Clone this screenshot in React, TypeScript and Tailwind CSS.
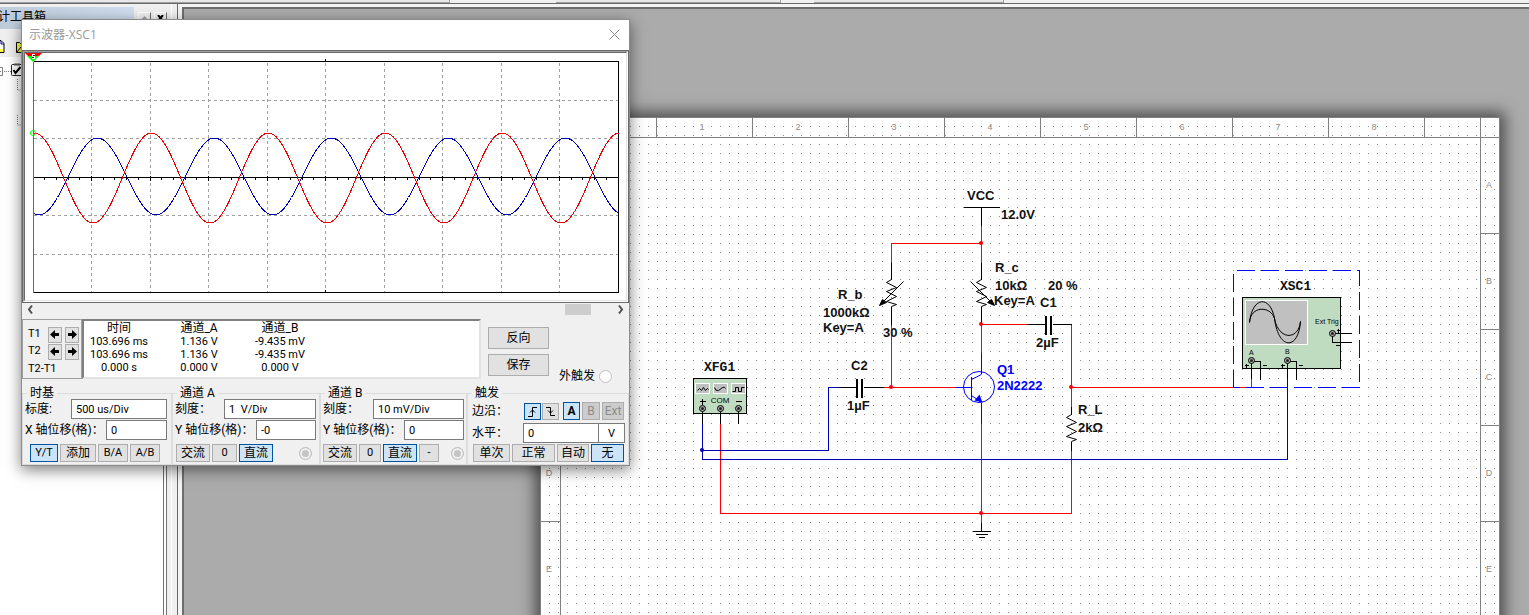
import { FC, ReactNode } from "react";
import clsx from "clsx";

type Point = [number, number];

const PERIOD = 117;

const wave = (peak: number, middle: number, amplitude: number) => {
  const points: string[] = [];
  for (let x = 33; x <= 618; x += 3) {
    const y = middle - amplitude * Math.cos(((x - peak) / PERIOD) * 2 * Math.PI);
    points.push(`${x},${y.toFixed(1)}`);
  }
  return points.join(" ");
};

/* ---------- Schematic parts ---------- */

const Wire: FC<{ points: Point[]; color?: string; width?: number }> = ({
  points,
  color = "#000",
  width = 1,
}) => (
  <polyline
    points={points.map((p) => p.join(",")).join(" ")}
    fill="none"
    stroke={color}
    strokeWidth={width}
  />
);

const Label: FC<{ x: number; y: number; fill?: string; children: ReactNode }> = ({
  x,
  y,
  fill = "#111",
  children,
}) => (
  <text x={x} y={y} fill={fill} className="font-['Liberation_Sans',sans-serif] text-[13px] font-bold">
    {children}
  </text>
);

const Resistor: FC<{ x: number; y: number }> = ({ x, y }) => (
  <path
    d={`M${x} ${y}l-5 3l10 5l-10 4l10 5l-10 5l10 3l-5 2`}
    fill="none"
    stroke="#000"
  />
);

const Terminal: FC<{ x: number; y: number }> = ({ x, y }) => (
  <g>
    <circle cx={x} cy={y} r="3" fill="#b0b0b0" stroke="#000" />
    <circle cx={x} cy={y} r="1.5" fill="#222" />
  </g>
);

const RED = "#ff0000";
const BLUE = "#0000b4";
const PART = "#0000ff";

const frameNumbers = [1, 2, 3, 4, 5, 6, 7, 8];
const frameLetters = ["A", "B", "C", "D", "E"];
const junctions: Point[] = [[981, 243], [981, 324], [891, 387], [1071, 387], [981, 513]];

const Schematic: FC = () => (
  <svg
    viewBox="540 117 960 700"
    className="block h-[700px] w-[960px] shrink-0 bg-white shadow-[0_0_14px_5px_rgba(0,0,0,0.55)]"
    role="img"
    aria-label="放大电路"
  >
    <defs>
      <pattern id="dots" width="9" height="9" patternUnits="userSpaceOnUse">
        <rect width="1" height="1" fill="#8c8c8c" />
      </pattern>
    </defs>
    <rect x="540" y="117" width="960" height="700" fill="url(#dots)" />

    {/* Frame with zone marks */}
    <g transform="translate(.5 .5)" stroke="#808080" fill="none" shapeRendering="crispEdges">
      <path d="M540 817V117H1499V817M560 117V817M1480 117V817M540 137H1499" />
      {frameNumbers.map((n) => (
        <path key={n} d={`M${656 + n * 96} 117v20`} />
      ))}
      <path d="M656 117v20" />
      {frameLetters.map((l, i) => (
        <path key={l} d={`M540 ${233 + i * 96}h20M1480 ${233 + i * 96}h19`} />
      ))}
    </g>
    <g fill="#8c8c8c" textAnchor="middle" className="font-['Liberation_Sans',sans-serif] text-[9px]">
      {frameNumbers.map((n) => (
        <text key={n} x={606 + n * 96} y="130">{n}</text>
      ))}
      {frameLetters.map((l, i) => (
        <g key={l}>
          <text x="549" y={188 + i * 96}>{l}</text>
          <text x="1489" y={188 + i * 96}>{l}</text>
        </g>
      ))}
    </g>

    {/* Wires */}
    <g transform="translate(.5 .5)" shapeRendering="crispEdges">
      <Wire color={RED} points={[[981, 225], [981, 262]]} />
      <Wire color={RED} points={[[981, 243], [891, 243], [891, 262]]} />
      <Wire color={RED} points={[[891, 324], [891, 387]]} />
      <Wire color={RED} points={[[883, 387], [955, 387]]} />
      <Wire color={RED} points={[[981, 352], [981, 324], [1026, 324]]} />
      <Wire color={RED} points={[[1071, 324], [1071, 406]]} />
      <Wire color={RED} points={[[1071, 387], [1251, 387], [1251, 378]]} />
      <Wire color={RED} points={[[981, 423], [981, 522]]} />
      <Wire color={RED} points={[[720, 423], [720, 513], [1071, 513], [1071, 450]]} />
      <Wire color={BLUE} points={[[702, 423], [702, 459], [1287, 459], [1287, 378]]} />
      <Wire color={BLUE} points={[[702, 450], [828, 450], [828, 387], [838, 387]]} />

      {/* VCC and ground */}
      <Wire points={[[963, 207], [999, 207]]} />
      <Wire points={[[981, 207], [981, 225]]} />
      <Wire points={[[981, 522], [981, 531]]} />
      <Wire points={[[972, 531], [990, 531]]} />
      <Wire points={[[975, 534], [987, 534]]} />
      <Wire points={[[978, 537], [984, 537]]} />

      {/* Resistor leads */}
      <Wire points={[[891, 262], [891, 279]]} />
      <Wire points={[[891, 306], [891, 324]]} />
      <Wire points={[[981, 262], [981, 279]]} />
      <Wire points={[[981, 306], [981, 323]]} />
      <Wire points={[[1071, 406], [1071, 414]]} />
      <Wire points={[[1071, 441], [1071, 450]]} />

      {/* Capacitors */}
      <Wire points={[[838, 387], [856, 387]]} />
      <Wire points={[[863, 387], [883, 387]]} />
      <Wire width={2} points={[[856.5, 378], [856.5, 397]]} />
      <Wire width={2} points={[[861.5, 378], [861.5, 397]]} />
      <Wire points={[[1026, 324], [1045, 324]]} />
      <Wire points={[[1052, 324], [1071, 324]]} />
      <Wire width={2} points={[[1045.5, 315], [1045.5, 334]]} />
      <Wire width={2} points={[[1050.5, 315], [1050.5, 334]]} />

      {/* Transistor leads */}
      <Wire color={PART} points={[[955, 387], [971, 387]]} />
      <Wire color={PART} points={[[981, 352], [981, 373]]} />
      <Wire color={PART} points={[[981, 402], [981, 423]]} />
      <Wire color={PART} points={[[971, 376], [971, 399]]} />
    </g>

    <g transform="translate(.5 .5)">
      <circle cx="978.5" cy="386.500" r="15.5" fill="none" stroke={PART} />
      <path d="M971 379L981 374M971 395L981 402" stroke={PART} />
      <path d="M979 394L982 402L974 400Z" fill={PART} />
      <Resistor x={891} y={279} />
      <Resistor x={981} y={279} />
      <Resistor x={1071} y={414} />
      <path d="M903 281L880 304M970 281L993 304" stroke="#000" />
      <path d="M879 305L882 299L886 302ZM994 305L991 299L987 302Z" fill="#000" stroke="#000" />
      {junctions.map(([x, y]) => (
        <circle key={`${x}-${y}`} cx={x - 0.5} cy={y - 0.5} r="2" fill={RED} />
      ))}
      <circle cx="701.5" cy="449.500" r="2" fill={BLUE} />
    </g>

    <Label x={967} y={200}>VCC</Label>
    <Label x={1001} y={219}>12.0V</Label>
    <Label x={838} y={299}>R_b</Label>
    <Label x={823} y={317}>1000kΩ</Label>
    <Label x={823} y={332}>Key=A</Label>
    <Label x={883} y={337}>30 %</Label>
    <Label x={995} y={272}>R_c</Label>
    <Label x={995} y={290}>10kΩ</Label>
    <Label x={994} y={305}>Key=A</Label>
    <Label x={1048} y={290}>20 %</Label>
    <Label x={1040} y={307}>C1</Label>
    <Label x={1036} y={347}>2µF</Label>
    <Label x={851} y={370}>C2</Label>
    <Label x={847} y={410}>1µF</Label>
    <Label x={997} y={374} fill={PART}>Q1</Label>
    <Label x={997} y={390} fill={PART}>2N2222</Label>
    <Label x={1078} y={414}>R_L</Label>
    <Label x={1078} y={432}>2kΩ</Label>

    {/* Function generator */}
    <text x="704" y="371" fill="#111" className="font-['Liberation_Mono',monospace] text-[13px] font-bold">XFG1</text>
    <g transform="translate(.5 .5)">
      <rect x="693" y="378" width="53" height="35" fill="#c0dcc0" stroke="#000" shapeRendering="crispEdges" />
      {[695, 713, 731].map((x) => (
        <rect key={x} x={x} y="383" width="14" height="10" fill="#c0c0c0" stroke="#fff" shapeRendering="crispEdges" />
      ))}
      <path
        d="M697 390l2-2l2 2l2-3l2 3l2-2l1 1M714 387q1 4 4 3l4-3q2-1 3 1M732 391h3v-4h3v4h3v-4h3"
        fill="none"
        stroke="#000"
      />
      <path d="M702 398v6M699 401h6M735 401h6" stroke="#000" shapeRendering="crispEdges" />
      <path d="M702 408v15M720 408v15M738 408v15" stroke="#000" shapeRendering="crispEdges" />
      <Terminal x={702} y={408} />
      <Terminal x={720} y={408} />
      <Terminal x={738} y={408} />
    </g>
    <text x="720" y="403" textAnchor="middle" className="font-['Liberation_Sans',sans-serif] text-[8px]">COM</text>

    {/* Oscilloscope */}
    <text x="1280" y="290" fill="#111" className="font-['Liberation_Mono',monospace] text-[13px] font-bold">XSC1</text>
    <g transform="translate(.5 .5)">
      <path
        d="M1233 387V270H1359V387H1233"
        fill="none"
        stroke={PART}
        strokeDasharray="18 6"
        shapeRendering="crispEdges"
      />
      <rect x="1242" y="297" width="98" height="71" fill="#c0dcc0" stroke="#000" shapeRendering="crispEdges" />
      <rect x="1245" y="300" width="62" height="44" fill="#c0c0c0" stroke="#fff" shapeRendering="crispEdges" />
      <path
        d="M1249 322C1252 295 1270 295 1274 318C1278 350 1298 350 1300 321M1249 322C1250 305 1270 305 1274 318C1278 340 1298 340 1300 321"
        fill="none"
        stroke="#000"
      />
      <g fill="none" stroke="#000" shapeRendering="crispEdges">
        <path d="M1251 361V378M1251 361H1260V379M1287 361V378M1287 361H1296V379" />
        <path d="M1351 333H1332V342H1351" />
        <path d="M1244 365h4M1246 363v4M1262 365h4M1280 365h4M1282 363v4M1298 365h4M1336 330h4M1338 328v4M1335 345h4" />
      </g>
      <Terminal x={1251} y={360} />
      <Terminal x={1287} y={360} />
      <Terminal x={1332} y={333} />
    </g>
    <g className="font-['Liberation_Sans',sans-serif] text-[7px]">
      <text x="1315" y="324">Ext Trig</text>
      <text x="1249" y="355">A</text>
      <text x="1285" y="354">B</text>
    </g>
  </svg>
);

/* ---------- Oscilloscope window ---------- */

const columns = [1, 2, 3, 4, 5, 6, 7, 8, 9].map((i) => Math.floor(33 + i * 58.5));
const rows = [100, 138, 215, 254];
const ticks = Array.from({ length: 49 }, (_, i) => Math.floor(33 + (i + 1) * 11.7));

const ScopeScreen: FC = () => (
  <div className="border border-[#696969]">
    <div className="border border-t-[#a0a0a0] border-r-white border-b-white border-l-[#a0a0a0]">
      <div className="border border-t-[#696969] border-r-[#e3e3e3] border-b-[#e3e3e3] border-l-[#696969] bg-white">
        <svg viewBox="25 53 601 247" className="block h-[247px] w-full" role="img" aria-label="波形">
          <g transform="translate(.5 .5)" fill="none" shapeRendering="crispEdges">
            <g stroke="#a0a0a0" strokeDasharray="3 3">
              {columns.map((x) => (
                <path key={x} d={`M${x} 62V292`} />
              ))}
              {rows.map((y) => (
                <path key={y} d={`M33 ${y}H618`} />
              ))}
            </g>
            <path d="M33 61H618V292H33M33 177H618M325 58v3M325 289v3" stroke="#000" />
            {ticks.map((x, i) => (
              <path key={x} d={i % 5 === 4 ? `M${x} 175v5` : `M${x} 176v3`} stroke="#000" />
            ))}
            <polyline points={wave(97, 176, 38.5)} stroke="#0000b4" />
            <polyline points={wave(34, 177.5, 45)} stroke="#e60000" />
            <path d="M33 61V292" stroke="#ff00ff" />
          </g>
          <circle cx="33" cy="133" r="2.500" fill="none" stroke="#00ff00" />
          <path d="M25 53h17l-3 3h-11z" fill="#f00" />
          <path d="M27 56h12l-6 6z" fill="#00ff00" />
          <path d="M32 54h3v5h-3z" fill="#fff" />
          <path d="M33 55h2v1h-2zM32 57h2v1h-2z" fill="#222" />
        </svg>
      </div>
    </div>
  </div>
);

const Button: FC<{ active?: boolean; disabled?: boolean; label?: string; className?: string; children: ReactNode }> = ({
  active,
  disabled,
  label,
  className,
  children,
}) => (
  <button
    type="button"
    disabled={disabled}
    aria-label={label}
    className={clsx(
      "flex shrink-0 items-center justify-center border whitespace-nowrap",
      active ? "border-[#00549b] bg-[#cce4f7]" : "border-[#adadad]",
      !active && (disabled ? "bg-[#cccccc] text-[#8c8c8c]" : "bg-[#e1e1e1]"),
      className
    )}
  >
    {children}
  </button>
);

const Field: FC<{ id: string; label: string; value: string; width: string }> = ({ id, label, value, width }) => (
  <div className="flex h-5 items-center justify-between">
    <label htmlFor={id} className="whitespace-nowrap">
      {label}
    </label>
    <input
      id={id}
      defaultValue={value}
      className={clsx("h-5 shrink-0 border border-[#7a7a7a] bg-white px-1 text-[11px]", width)}
    />
  </div>
);

const Group: FC<{ title: string; className?: string; children: ReactNode }> = ({ title, className, children }) => (
  <fieldset className={clsx("min-w-0 border border-[#dcdcdc] pb-[2px] pl-[2px]", className)}>
    <legend className="-mb-px ml-[2px] px-[3px] leading-[14px]">{title}</legend>
    {children}
  </fieldset>
);

const Radio: FC<{ label: string; checked?: boolean }> = ({ label, checked }) => (
  <input
    type="radio"
    aria-label={label}
    defaultChecked={checked}
    className="size-[13px] shrink-0 appearance-none rounded-full border border-[#c0c0c0] bg-white checked:bg-[#c4c4c4] checked:shadow-[inset_0_0_0_2px_#f0f0f0]"
  />
);

const CursorRow: FC<{ name: string }> = ({ name }) => (
  <div className="flex h-[17px] items-center">
    <span className="w-5">{name}</span>
    <Button label={`${name} 左移`} className="h-4 w-[14px]">
      <svg viewBox="0 0 10 9" className="h-[9px] w-[10px] shrink-0">
        <path d="M0 4.500L5 0V3H9V6H5V9Z" />
      </svg>
    </Button>
    <Button label={`${name} 右移`} className="ml-[3px] h-4 w-[14px]">
      <svg viewBox="0 0 10 9" className="h-[9px] w-[10px] shrink-0">
        <path d="M10 4.500L5 0V3H1V6H5V9Z" />
      </svg>
    </Button>
  </div>
);

const readings = [
  ["103.696 ms", "1.136 V", "-9.435 mV"],
  ["103.696 ms", "1.136 V", "-9.435 mV"],
  ["0.000 s", "0.000 V", "0.000 V"],
];

const Readout: FC = () => (
  <div className="flex h-[60px]">
    <div className="w-[60px] border border-[#a0a0a0] pt-[6px] pl-[5px] text-[11px]">
      <CursorRow name="T1" />
      <CursorRow name="T2" />
      <div className="mt-[2px] leading-[14px]">T2-T1</div>
    </div>
    <div className="w-[399px] border-2 border-t-[#808080] border-r-[#e3e3e3] border-b-[#e3e3e3] border-l-[#808080] bg-white">
      <table className="table-fixed text-center text-[11px] leading-[13px] whitespace-nowrap">
        <thead>
          <tr className="h-[14px] text-[12px]">
            <th className="w-[70px] p-0 font-normal">时间</th>
            <th className="w-[90px] p-0 font-normal">通道_A</th>
            <th className="w-[72px] p-0 font-normal">通道_B</th>
          </tr>
        </thead>
        <tbody>
          {readings.map((row, i) => (
            <tr key={i}>
              {row.map((cell, j) => (
                <td key={j} className="p-0">{cell}</td>
              ))}
            </tr>
          ))}
        </tbody>
      </table>
    </div>
    <div className="flex flex-col gap-[5px] pt-2 pl-[7px]">
      <Button className="h-[22px] w-[61px]">反向</Button>
      <Button className="h-[22px] w-[61px]">保存</Button>
    </div>
    <label className="-mb-[6px] ml-[10px] flex items-center gap-1 self-end whitespace-nowrap">
      外触发
      <Radio label="外触发" />
    </label>
  </div>
);

const ScopeWindow: FC = () => (
  <section
    aria-label="示波器-XSC1"
    className="absolute top-[19px] left-[21px] z-10 w-[609px] border border-[#8c8c8c] bg-[#f0f0f0] text-[12px] shadow-[0_4px_14px_rgba(0,0,0,0.5)]"
  >
    <header className="flex h-[30px] items-center justify-between bg-white pr-[9px] pb-px pl-[7px] text-[#999]">
      <h1 className="font-['Open_Sans','Noto_Sans_CJK_SC',sans-serif]">示波器-XSC1</h1>
      <button type="button" aria-label="关闭">
        <svg viewBox="0 0 11 11" className="block size-[11px]" stroke="#8c8c8c" fill="none">
          <path d="M.5 .5l10 10M10.500 .5l-10 10" />
        </svg>
      </button>
    </header>

    <ScopeScreen />

    {/* Horizontal scroll */}
    <div className="flex h-4 items-start justify-between px-[5px] pt-px">
      <button type="button" aria-label="向左滚动">
        <svg viewBox="0 0 6 10" className="h-[11px] w-[6px]" fill="none" stroke="#505050" strokeWidth="2">
          <path d="M5 1L2 5L5 9" />
        </svg>
      </button>
      <div className="flex flex-1 justify-end pr-[27px]">
        <div className="h-[11px] w-[26px] bg-[#cdcdcd]" />
      </div>
      <button type="button" aria-label="向右滚动">
        <svg viewBox="0 0 6 10" className="h-[11px] w-[6px]" fill="none" stroke="#505050" strokeWidth="2">
          <path d="M1 1L4 5L1 9" />
        </svg>
      </button>
    </div>

    <Readout />

    <div className="mt-[7px] grid grid-cols-[150px_148px_147px_1fr]">
      <Group title="时基" className="pr-1">
        <Field id="timebase" label="标度:" value="500 us/Div" width="w-[96px]" />
        <div className="mt-px">
          <Field id="x-offset" label="X 轴位移(格)：" value="0" width="w-[61px]" />
        </div>
        <div className="mt-1 flex gap-[2px] pl-[5px] text-[11px]">
          <Button active className="h-[18px] w-[28px]">Y/T</Button>
          <Button className="h-[18px] w-[36px] text-[12px]">添加</Button>
          <Button className="h-[18px] w-[30px]">B/A</Button>
          <Button className="h-[18px] w-[30px]">A/B</Button>
        </div>
      </Group>

      <Group title="通道 A" className="pr-[3px]">
        <Field id="scale-a" label="刻度：" value="1  V/Div" width="w-[92px]" />
        <div className="mt-px">
          <Field id="offset-a" label="Y 轴位移(格)：" value="-0" width="w-[60px]" />
        </div>
        <div className="mt-1 flex items-center gap-[2px] pl-px">
          <Button className="h-[18px] w-[34px]">交流</Button>
          <Button className="h-[18px] w-[25px] text-[11px]">0</Button>
          <Button active className="h-[18px] w-[34px]">直流</Button>
          <span className="ml-auto flex pr-1">
            <Radio label="通道 A" checked />
          </span>
        </div>
      </Group>

      <Group title="通道 B" className="pr-[2px]">
        <Field id="scale-b" label="刻度：" value="10 mV/Div" width="w-[91px]" />
        <div className="mt-px">
          <Field id="offset-b" label="Y 轴位移(格)：" value="0" width="w-[60px]" />
        </div>
        <div className="mt-1 flex items-center gap-[2px]">
          <Button className="h-[18px] w-[34px]">交流</Button>
          <Button className="h-[18px] w-[22px] text-[11px]">0</Button>
          <Button active className="h-[18px] w-[34px]">直流</Button>
          <Button className="h-[18px] w-[20px] text-[11px]">-</Button>
          <span className="ml-auto flex">
            <Radio label="通道 B" checked />
          </span>
        </div>
      </Group>

      <Group title="触发" className="pr-[2px]">
        <div className="flex h-6 items-center pl-[2px]">
          <span className="w-[52px]">边沿：</span>
          <Button active label="上升沿" className="size-[17px]">
            <svg viewBox="0 0 11 11" className="size-[11px] shrink-0" fill="none" stroke="#000">
              <path d="M1 10.500H5.500V1.500H10M3 6.500L5.500 4L8 6.500" />
            </svg>
          </Button>
          <Button label="下降沿" className="ml-px size-[17px]">
            <svg viewBox="0 0 11 11" className="size-[11px] shrink-0" fill="none" stroke="#000">
              <path d="M1 1.500H5.500V9.500H10M3 4.500L5.500 7L8 4.500" />
            </svg>
          </Button>
          <div className="ml-1 flex gap-[2px]">
            <Button active className="h-[18px] w-[17px] font-bold">A</Button>
            <Button disabled className="h-[18px] w-[18px]">B</Button>
            <Button disabled className="h-[18px] w-[22px]">Ext</Button>
          </div>
        </div>
        <div className="flex h-5 items-center pl-[2px]">
          <label htmlFor="level" className="w-[51px]">水平：</label>
          <input id="level" defaultValue="0" className="h-5 w-[76px] border border-[#7a7a7a] bg-white px-1 text-[11px]" />
          <input aria-label="单位" defaultValue="V" className="h-5 w-[26px] border border-l-0 border-[#7a7a7a] bg-white px-1 text-center text-[11px]" />
        </div>
        <div className="mt-px flex gap-[2px] pl-[3px]">
          <Button className="h-[18px] w-[37px]">单次</Button>
          <Button className="h-[18px] w-[43px]">正常</Button>
          <Button className="h-[18px] w-[32px]">自动</Button>
          <Button active className="h-[18px] w-[33px]">无</Button>
        </div>
      </Group>
    </div>
  </section>
);

/* ---------- Application shell ---------- */

const Toolbox: FC = () => (
  <aside className="flex w-[167px] shrink-0 flex-col bg-[#f0f0f0] pt-[3px]">
    <div className="flex h-[22px] items-center">
      <h2 className="flex h-full w-[134px] items-center bg-linear-to-r from-[#bfcddb] to-[#cfdeee] pb-[3px] text-[12px] whitespace-nowrap">
        <span className="-ml-[2px]">计工具箱</span>
      </h2>
      <div className="ml-1 flex gap-[3px]">
        <button type="button" aria-label="上移" className="flex size-[13px] items-center justify-center border border-t-white border-r-[#696969] border-b-[#696969] border-l-white">
          <svg viewBox="0 0 7 4" className="h-1 w-[7px]"><path d="M0 4L3.500 0L7 4Z" fill="#a0a0a0" /></svg>
        </button>
        <button type="button" aria-label="关闭工具箱" className="flex size-[13px] items-center justify-center border border-t-white border-r-[#696969] border-b-[#696969] border-l-white">
          <svg viewBox="0 0 7 6" className="h-[6px] w-[7px]" stroke="#000" strokeWidth="2"><path d="M1 0L6 6M6 0L1 6" /></svg>
        </button>
      </div>
    </div>
    <div className="flex h-[29px] items-end border-b border-white">
      <svg viewBox="0 0 22 20" className="h-5 w-[22px]">
        <path d="M0 3.500h1l3 3v9H0" fill="#fff" stroke="#000" />
        <path d="M0 12h3v3H0z" fill="#ffff50" />
        <path d="M1 4v3h3" fill="none" stroke="#0000a0" />
        <path d="M16.500 15.500v-10h3l1 1h2v9z" fill="#ffff50" stroke="#000" />
        <path d="M17 15l4-5h2" fill="none" stroke="#000" />
      </svg>
    </div>
    <div className="flex-1 border-r-4 border-double border-[#707070] bg-white">
      <svg viewBox="0 58 22 70" className="h-[70px] w-[22px]" fill="none">
        <path d="M0 67.500h2.500v8H0M0 71.500h1" stroke="#808080" />
        <path d="M4 71.500h7M17.500 79v11h5M17.500 115v10h5" stroke="#808080" strokeDasharray="1 1" />
        <rect x="11.500" y="64.500" width="11" height="11" rx="1" stroke="#222" />
        <path d="M14 64.500h6" stroke="#555" strokeWidth="2" />
        <path d="M13.500 70l2 3l5-6" stroke="#000" strokeWidth="2" />
      </svg>
    </div>
  </aside>
);

const App: FC = () => (
  <div className="relative flex h-screen flex-col overflow-hidden bg-[#f0f0f0] font-[Roboto,'Noto_Sans_CJK_SC',sans-serif] text-black">
    {/* Lower edge of the toolbar tabs */}
    <div className="flex h-1 shrink-0 border-b border-[#696969]">
      <div className="w-[450px] border-r border-b border-[#a0a0a0] bg-[#e8e8e8]" />
      <div className="w-[106px]" />
      <div className="w-[225px] border-r border-b border-[#a0a0a0] bg-[#e8e8e8]" />
      <div className="w-[33px]" />
      <div className="w-[190px] border-r border-b border-[#a0a0a0] bg-[#e8e8e8]" />
    </div>

    <div className="flex min-h-0 flex-1">
      <Toolbox />
      <div className="w-[5px] border-r border-white" />
      <div className="w-[6px] border-r border-[#696969]" />
      <main className="min-w-0 flex-1 bg-[#f4f4f4] pt-[3px] pl-1">
        <div className="h-full overflow-hidden border-t-2 border-l-2 border-[#6e6e6e] bg-[#ababab] pt-[108px] pl-[356px]">
          <Schematic />
        </div>
      </main>
    </div>

    <ScopeWindow />
  </div>
);

export default App;
